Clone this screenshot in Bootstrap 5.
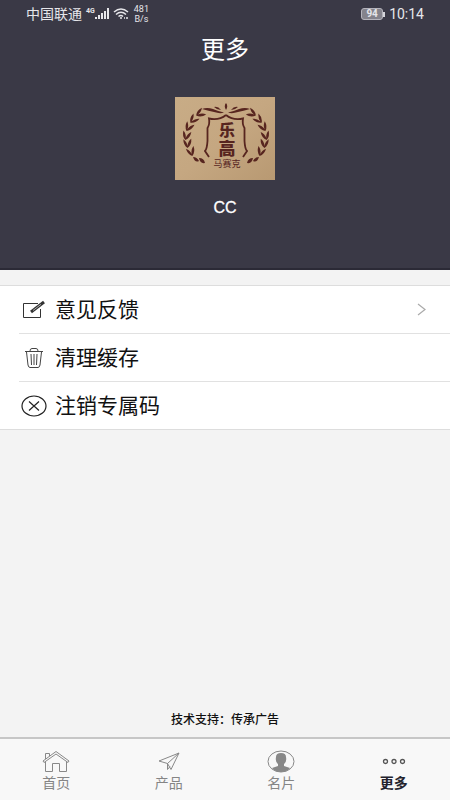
<!DOCTYPE html>
<html lang="zh-CN">
<head>
<meta charset="utf-8">
<meta name="viewport" content="width=device-width, initial-scale=1">
<title>更多</title>
<link href="https://cdn.jsdelivr.net/npm/bootstrap@5.3.0/dist/css/bootstrap.min.css" rel="stylesheet">
<style>
body{font-family:Roboto,"Noto Sans CJK SC",sans-serif;background:#f3f3f3;color:#111}
svg{display:block;flex:none}
.top-panel{background:#3a3946;color:#fff;height:270px;border-bottom:2px solid #2b2a36}
.status{height:28px;padding:0 26px;font-size:14px;line-height:28px;color:#e6e6ea}
.rate{font-size:9px;line-height:10px;margin-left:5px}
.net{font-size:7px;line-height:8px;align-self:flex-start;margin-top:7px}
.battery{font-size:10px;line-height:10px;background:#84838c;border:1px solid #b5b4bc;border-radius:3px;width:22px;text-align:center;font-weight:700}
.cap{width:2px;height:5px;background:#d5d5da;margin-right:4px}
.page-title{font-size:24px;line-height:44px;font-weight:400}
.brand-logo{margin-top:25px}
.user-name{font:16px/24px "Liberation Sans",sans-serif;margin-top:16px;-webkit-text-stroke:.3px #fff}
.menu{margin-top:15px;background:#fff;border-top:1px solid #ddd;border-bottom:1px solid #ddd}
.menu-row{height:47px;border:0;background:none;color:#111;font-size:21px;line-height:32px;padding:0 24px 0 2px;text-align:left}
.menu li{margin-left:19px}
.menu li+li{border-top:1px solid #e1e1e1}
.pic{width:26px;margin-right:8px}
.support{font-size:12px;line-height:18px;font-weight:500;padding-bottom:8px}
.tabs{background:#f8f8f8;border-top:2px solid #c6c6c6;height:63px;padding-bottom:4px}
.tab{color:#858585;font-size:14px;line-height:16px;padding-top:10px}
.tab svg{height:26px}
.tab.current{color:#22222c;font-weight:700}
</style>
<script defer src="https://cdn.jsdelivr.net/npm/bootstrap@5.3.0/dist/js/bootstrap.bundle.min.js"></script>
</head>
<body class="d-flex flex-column min-vh-100">
<header class="top-panel d-flex flex-column align-items-stretch">
  <div class="status d-flex align-items-center">
    <span>中国联通</span>
    <span class="net fw-bold ms-1">4G</span>
    <svg width="14" height="12" fill="#e6e6ea"><path d="M0 9h2v2H0zM3 7h2v4H3zM6 5h2v6H6zM9 3h2v8H9zM12 0h2v11h-2z"/></svg>
    <svg class="ms-1" width="16" height="12" fill="none" stroke="#e6e6ea" stroke-width="1.5"><path d="M1 4Q8-2 15 4M3 6.500Q8 2 13 6.500M5.500 8.500Q8 6.500 10 8.500"/><path d="M7 10h2M11 10h1M13 10h2"/></svg>
    <span class="rate text-center">481<br>B/s</span>
    <span class="battery ms-auto">94</span><span class="cap"></span>
    <time>10:14</time>
  </div>
  <h1 class="page-title text-center mb-0">更多</h1>
  <svg class="brand-logo align-self-center" width="100" height="83" viewBox="0 0 100 83" role="img" aria-label="乐高马赛克">
    <defs>
      <linearGradient id="sand" x2="1" y2="1"><stop stop-color="#c8ac86"/><stop offset=".5" stop-color="#c5a781"/><stop offset="1" stop-color="#b89972"/></linearGradient>
      <path id="leaves" d="M0 1Q-4-2-3.500-8Q0-5 0-1Q1-6 4.500-8Q4.500-2 0 1z"/>
      <g id="half" fill="#57251f">
        <path fill="none" stroke="#57251f" stroke-width="1.800" d="M51 18C46 22 41 23 34 21.500Q35 27 32.500 31V44Q32 52 30 54L34 60"/>
        <path d="M49 15.500Q43 14 38 12Q32 10 27 12Q34 14 39 15Q45 17 49 15.500zM46 13Q43 9 39 10Q42 13 46 13z"/>
        <use href="#leaves" transform="translate(22 18) rotate(58)"/>
        <use href="#leaves" transform="translate(16 25) rotate(40)"/>
        <use href="#leaves" transform="translate(12 33) rotate(25)"/>
        <use href="#leaves" transform="translate(10.500 42) rotate(10)"/>
        <use href="#leaves" transform="translate(12.500 50) rotate(-5)"/>
        <use href="#leaves" transform="translate(17 58) rotate(-20)"/>
        <path d="M18 60Q22 60 24 64Q20 66 18 60zM24 61Q29 61 30 66Q25 67 24 61z"/>
      </g>
    </defs>
    <path fill="url(#sand)" d="M0 0h100v83H0z"/>
    <use href="#half"/><use href="#half" transform="matrix(-1 0 0 1 102 0)"/>
    <path fill="#57251f" d="M51 6Q48.500 9 51 13Q53.500 9 51 6z"/>
    <g fill="#57251f" text-anchor="middle" font-family="Noto Sans CJK SC,sans-serif"><text x="52" y="39" font-size="16" font-weight="900">乐</text><text x="52" y="58" font-size="17" font-weight="900">高</text><text x="52" y="70" font-size="9">马赛克</text></g>
  </svg>
  <div class="user-name text-center">CC</div>
</header>
<main class="flex-grow-1 d-flex flex-column">
  <ul class="menu list-unstyled mb-0">
    <li><button type="button" class="menu-row w-100 d-flex align-items-center">
      <span class="pic"><svg width="26" height="22" fill="none" stroke="#333"><path d="M17 4.500H2.500v14h17V10"/><path stroke-width="3" d="M10 13L23 3"/><path stroke="#aaa" d="M12 11.500L20 5.300"/></svg></span>
      <span>意见反馈</span>
      <svg class="ms-auto" width="9" height="13" fill="none" stroke="#aaa" stroke-width="1.200"><path d="M1 1l7 5.500L1 12"/></svg></button></li>
    <li><button type="button" class="menu-row w-100 d-flex align-items-center">
      <span class="pic"><svg width="26" height="22" fill="none" stroke="#444"><path d="M4 4.500h18M9 4Q9 1.500 11 1.500h4Q17 1.500 17 4M5.500 5l1.500 13Q7.500 20.500 9 20.500h8Q18.500 20.500 19 18L20.500 5M10 7l.5 11M13 7v11M16 7l-.5 11"/></svg></span>
      <span>清理缓存</span></button></li>
    <li><button type="button" class="menu-row w-100 d-flex align-items-center">
      <span class="pic"><svg width="26" height="22" fill="none" stroke="#222" stroke-width="1.200"><ellipse cx="13" cy="11" rx="12" ry="10"/><path d="M8 6.500l10 9M18 6.500l-10 9"/></svg></span>
      <span>注销专属码</span></button></li>
  </ul>
  <p class="support text-center mt-auto mb-0">技术支持：传承广告</p>
</main>
<nav class="tabs d-flex">
  <a href="#" class="tab col d-flex flex-column align-items-center text-decoration-none">
    <svg width="28" viewBox="0 0 28 26" fill="none" stroke="#888"><path d="M1 12L14 2.500L27 12l-1 1.500L14 5L2 13.500zM3.500 13v9.500h7v-8h7v8h7V13M3.500 10V4.500h4V7"/></svg>首页</a>
  <a href="#" class="tab col d-flex flex-column align-items-center text-decoration-none">
    <svg width="28" viewBox="0 0 28 26" fill="none" stroke="#888"><path d="M4 12L24 4L16 20.500L12.500 14.500zM24 4L12.500 14.500v6l2.500-3"/></svg>产品</a>
  <a href="#" class="tab col d-flex flex-column align-items-center text-decoration-none">
    <svg width="28" viewBox="0 0 28 26"><ellipse cx="14" cy="12.500" rx="13" ry="10.500" fill="#f8f8f8" stroke="#888"/><path fill="#888" d="M9 8Q9 4 14 4T19 8Q20 13 17 15v2l6 2Q20 23 14 23T5 19l6-2v-2Q8 13 9 8z"/></svg>名片</a>
  <a href="#" class="tab current col d-flex flex-column align-items-center text-decoration-none" aria-current="page">
    <svg width="28" viewBox="0 0 28 26" fill="none" stroke="#555" stroke-width="1.300"><circle cx="5.500" cy="12.500" r="2"/><circle cx="14" cy="12.500" r="2"/><circle cx="22.500" cy="12.500" r="2"/></svg>更多</a>
</nav>
</body>
</html>
